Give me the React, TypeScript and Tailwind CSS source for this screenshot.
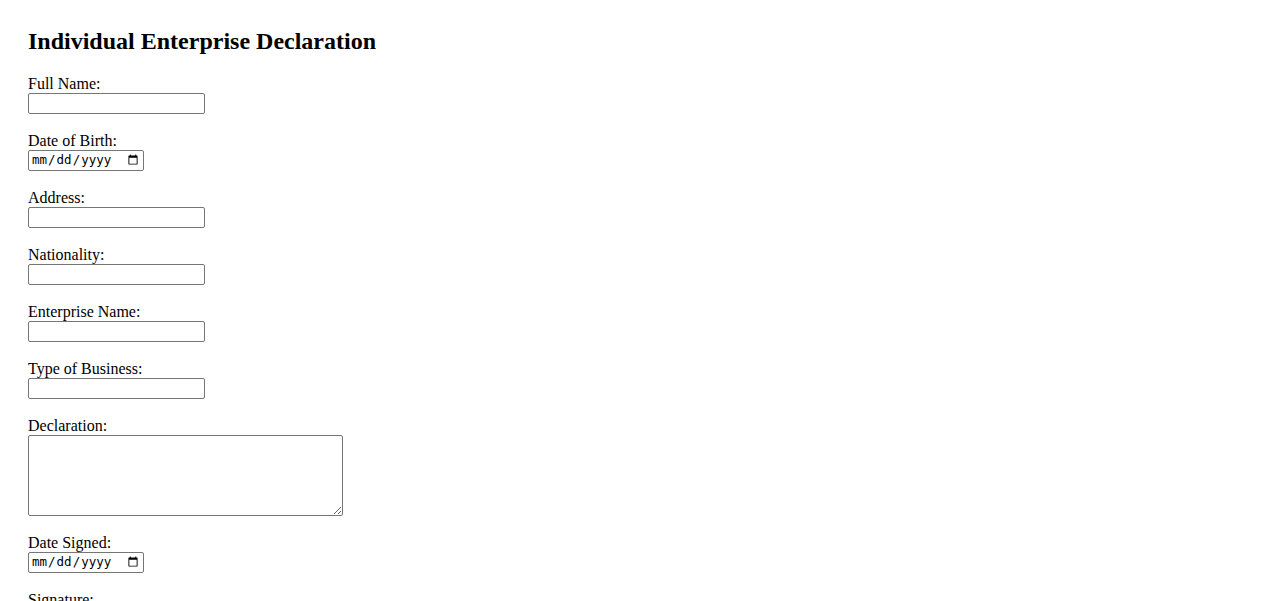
import React from "react";

const fields: { label: string; type: "text" | "date" | "textarea" }[] = [
  { label: "Full Name:", type: "text" },
  { label: "Date of Birth:", type: "date" },
  { label: "Address:", type: "text" },
  { label: "Nationality:", type: "text" },
  { label: "Enterprise Name:", type: "text" },
  { label: "Type of Business:", type: "text" },
  { label: "Declaration:", type: "textarea" },
  { label: "Date Signed:", type: "date" },
  { label: "Signature:", type: "text" },
];

function Field({ label, type }: { label: string; type: string }) {
  const box = "block border border-[#767676] rounded-[2px] bg-white outline-none";
  return (
    <div className="mb-[18px]">
      <label className="block h-[18px] leading-[18px]">{label}</label>
      {type === "textarea" ? (
        <textarea className={box + " w-[315px] h-[81px] resize p-[2px] text-[13px]"} />
      ) : type === "date" ? (
        <input
          type="date"
          className={box + " w-[116px] h-[21px] px-[2px] text-[12.5px] font-['DejaVu_Sans_Mono',monospace]"}
        />
      ) : (
        <input type="text" className={box + " w-[177px] h-[21px] px-[2px] text-[13px]"} />
      )}
    </div>
  );
}

export default function App() {
  return (
    <div className="min-h-screen bg-white text-black font-['Liberation_Serif',serif] text-[16px] px-[28px] pt-[28px]">
      <h2 className="text-[24px] font-bold leading-[27px] mb-[20px]">
        Individual Enterprise Declaration
      </h2>
      <form>
        {fields.map((f) => (
          <Field key={f.label} label={f.label} type={f.type} />
        ))}
      </form>
    </div>
  );
}
